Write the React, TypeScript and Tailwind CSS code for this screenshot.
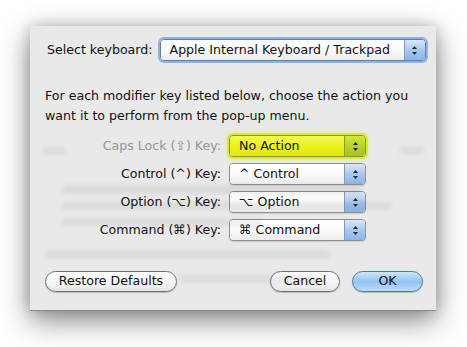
import React from 'react'

const font = { fontFamily: '"DejaVu Sans", "Liberation Sans", sans-serif' }

function Arrows({ dark = false }: { dark?: boolean }) {
  return (
    <svg width="7" height="11" viewBox="0 0 7 11" className={dark ? 'text-[#222]' : 'text-[#1d2a3a]'}>
      <path d="M3.5 1 L6 4 L1 4 Z" fill="currentColor" />
      <path d="M3.5 10 L6 7 L1 7 Z" fill="currentColor" />
    </svg>
  )
}

function Popup({
  label,
  width,
  variant = 'normal',
}: {
  label: string
  width: string
  variant?: 'normal' | 'focus' | 'yellow'
}) {
  const ring =
    variant === 'focus'
      ? 'shadow-[0_0_0_2px_rgba(110,160,225,0.75)] border-[#5f7fa8]'
      : variant === 'yellow'
        ? 'shadow-[0_0_0_2px_rgba(215,230,40,0.8),0_0_4px_2px_rgba(230,240,60,0.6)] border-[#8c9230]'
        : 'shadow-[0_1px_1px_rgba(0,0,0,0.12)] border-[#8f8f8f]'
  const body =
    variant === 'yellow'
      ? 'bg-gradient-to-b from-[#f3fa50] via-[#e9f21c] to-[#dfe90e]'
      : 'bg-gradient-to-b from-white via-[#fafafa] to-[#ececec]'
  const arrow =
    variant === 'yellow'
      ? 'bg-gradient-to-b from-[#d3e63a] via-[#b9d22a] to-[#a6c224] border-[#8c9a2a]'
      : 'bg-gradient-to-b from-[#dbe8f8] via-[#a9c8ee] to-[#8bb5e8] border-[#8199b9]'
  return (
    <div className={`${width} h-[22px] flex rounded-[4px] border overflow-hidden ${ring}`}>
      <div className={`flex-1 flex items-center pl-[9px] text-[#111] ${body}`}>{label}</div>
      <div className={`w-[21px] flex items-center justify-center border-l ${arrow}`}>
        <Arrows dark={variant === 'yellow'} />
      </div>
    </div>
  )
}

function PillButton({ children, width, blue = false }: { children: React.ReactNode; width: string; blue?: boolean }) {
  return (
    <div
      className={`${width} h-[21px] rounded-full border flex items-center justify-center text-[#111] ${
        blue
          ? 'border-[#4a79b0] bg-gradient-to-b from-[#cfe5fb] via-[#94c4f3] to-[#b9dcfb] shadow-[0_1px_1px_rgba(0,0,0,0.2)]'
          : 'border-[#6f6f6f] bg-gradient-to-b from-white via-[#f6f6f6] to-[#e6e6e6] shadow-[0_1px_1px_rgba(0,0,0,0.2)]'
      }`}
    >
      {children}
    </div>
  )
}

const rows: { label: string; value: string; variant: 'normal' | 'yellow'; muted?: boolean }[] = [
  { label: 'Caps Lock (⇪) Key:', value: 'No Action', variant: 'yellow', muted: true },
  { label: 'Control (^) Key:', value: '^ Control', variant: 'normal' },
  { label: 'Option (⌥) Key:', value: '⌥ Option', variant: 'normal' },
  { label: 'Command (⌘) Key:', value: '⌘ Command', variant: 'normal' },
]

export default function App() {
  return (
    <div className="w-[467px] h-[347px] bg-white pl-[30px] pt-[26px] overflow-hidden" style={font}>
      <div className="w-[406px] h-[285px] grid bg-[#e9e9e9] border-b border-[#8a8a8a] shadow-[0_10px_28px_rgba(0,0,0,0.45),0_0_14px_rgba(0,0,0,0.2)]">
        {/* blurred pane behind the sheet */}
        <div className="col-start-1 row-start-1 blur-[2px] opacity-[0.07] pt-[96px] flex flex-col">
          <div className="mx-[10px] h-px bg-[#444]" />
          <div className="flex justify-between px-[12px] mt-[24px]">
            <div className="w-[24px] h-[8px] bg-[#333] rounded" />
            <div className="w-[24px] h-[8px] bg-[#333] rounded" />
          </div>
          <div className="ml-[32px] mt-[30px] w-[300px] h-[9px] bg-[#222] rounded" />
          <div className="ml-[32px] mt-[8px] w-[330px] h-[8px] bg-[#333] rounded" />
          <div className="ml-[32px] mt-[8px] w-[200px] h-[8px] bg-[#333] rounded" />
          <div className="ml-[15px] mt-[24px] w-[285px] h-[9px] bg-[#333] rounded" />
          <div className="ml-[150px] mt-[16px] w-[140px] h-[8px] bg-[#333] rounded" />
        </div>

        <div className="col-start-1 row-start-1 flex flex-col text-[12.6px] text-[#111]">
          <div className="flex items-center pt-[13px] pl-[17px] gap-[7px]">
            <span>Select keyboard:</span>
            <Popup label="Apple Internal Keyboard / Trackpad" width="w-[266px]" variant="focus" />
          </div>

          <div className="pl-[15px] mt-[25px] leading-[20px]">
            <div>For each modifier key listed below, choose the action you</div>
            <div>want it to perform from the pop-up menu.</div>
          </div>

          <div className="mt-[9px] flex flex-col gap-[6px]">
            {rows.map((r) => (
              <div key={r.label} className="flex items-center">
                <div className={`w-[192px] text-right pr-[1px] ${r.muted ? 'text-[#959595]' : 'text-[#111]'}`}>
                  {r.label}
                </div>
                <div className="ml-[7px]">
                  <Popup label={r.value} width="w-[137px]" variant={r.variant} />
                </div>
              </div>
            ))}
          </div>

          <div className="mt-auto mb-[18px] flex items-center pl-[15px] pr-[13px]">
            <PillButton width="w-[132px]">Restore Defaults</PillButton>
            <div className="flex-1" />
            <PillButton width="w-[70px]">Cancel</PillButton>
            <div className="w-[12px]" />
            <PillButton width="w-[71px]" blue>
              OK
            </PillButton>
          </div>
        </div>
      </div>
    </div>
  )
}
